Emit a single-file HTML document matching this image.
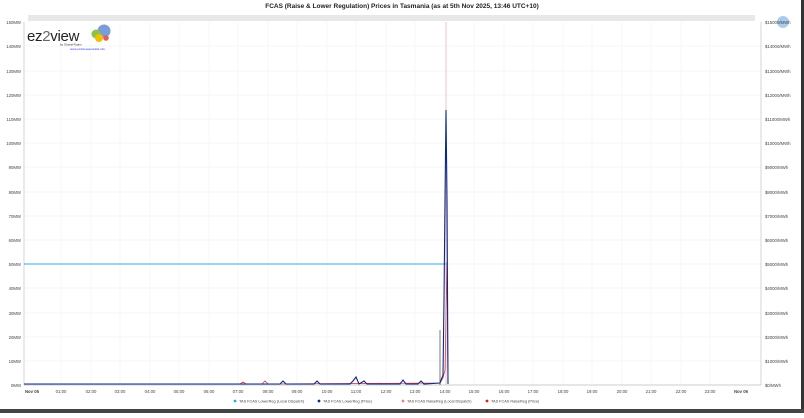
<!DOCTYPE html><html><head><style>body{margin:0;background:#fff;width:804px;height:413px;overflow:hidden;font-family:"Liberation Sans",sans-serif}</style></head><body>
<svg width="804" height="413" xmlns="http://www.w3.org/2000/svg" font-family="Liberation Sans, sans-serif">
<rect x="0" y="0" width="804" height="413" fill="#fff"/>
<rect x="801" y="0" width="3" height="413" fill="#333"/>
<rect x="0" y="409" width="804" height="4" fill="#444"/>
<text x="402" y="8" font-size="6.5" font-weight="bold" text-anchor="middle" fill="#222">FCAS (Raise &amp; Lower Regulation) Prices in Tasmania (as at 5th Nov 2025, 13:46 UTC+10)</text>
<rect x="28" y="15" width="727" height="6" fill="#e8e8e8"/>
<g stroke="#eee" stroke-width="0.6">
<line x1="24" y1="46" x2="761" y2="46"/><line x1="24" y1="71" x2="761" y2="71"/><line x1="24" y1="95" x2="761" y2="95"/><line x1="24" y1="119" x2="761" y2="119"/><line x1="24" y1="143" x2="761" y2="143"/><line x1="24" y1="167" x2="761" y2="167"/><line x1="24" y1="192" x2="761" y2="192"/><line x1="24" y1="216" x2="761" y2="216"/><line x1="24" y1="240" x2="761" y2="240"/><line x1="24" y1="264" x2="761" y2="264"/><line x1="24" y1="288" x2="761" y2="288"/><line x1="24" y1="313" x2="761" y2="313"/><line x1="24" y1="337" x2="761" y2="337"/><line x1="24" y1="361" x2="761" y2="361"/>
</g>
<g stroke="#f2f2f2" stroke-width="0.6">
<line x1="61" y1="22" x2="61" y2="385"/><line x1="91" y1="22" x2="91" y2="385"/><line x1="120" y1="22" x2="120" y2="385"/><line x1="150" y1="22" x2="150" y2="385"/><line x1="179" y1="22" x2="179" y2="385"/><line x1="209" y1="22" x2="209" y2="385"/><line x1="238" y1="22" x2="238" y2="385"/><line x1="268" y1="22" x2="268" y2="385"/><line x1="297" y1="22" x2="297" y2="385"/><line x1="327" y1="22" x2="327" y2="385"/><line x1="356" y1="22" x2="356" y2="385"/><line x1="386" y1="22" x2="386" y2="385"/><line x1="415" y1="22" x2="415" y2="385"/><line x1="474" y1="22" x2="474" y2="385"/><line x1="504" y1="22" x2="504" y2="385"/><line x1="533" y1="22" x2="533" y2="385"/><line x1="563" y1="22" x2="563" y2="385"/><line x1="592" y1="22" x2="592" y2="385"/><line x1="622" y1="22" x2="622" y2="385"/><line x1="651" y1="22" x2="651" y2="385"/><line x1="681" y1="22" x2="681" y2="385"/><line x1="710" y1="22" x2="710" y2="385"/>
</g>
<line x1="24" y1="22" x2="24" y2="385" stroke="#ccc" stroke-width="0.8"/>
<line x1="761" y1="22" x2="761" y2="385" stroke="#ccc" stroke-width="0.8"/>
<line x1="24" y1="385" x2="761" y2="385" stroke="#bbb" stroke-width="0.8"/>
<line x1="446" y1="22" x2="446" y2="385" stroke="#f3b0b0" stroke-width="0.8"/>
<g font-size="4.3" fill="#444" text-anchor="end">
<text x="21" y="24">150MW</text><text x="21" y="48">140MW</text><text x="21" y="73">130MW</text><text x="21" y="97">120MW</text><text x="21" y="121">110MW</text><text x="21" y="145">100MW</text><text x="21" y="169">90MW</text><text x="21" y="194">80MW</text><text x="21" y="218">70MW</text><text x="21" y="242">60MW</text><text x="21" y="266">50MW</text><text x="21" y="290">40MW</text><text x="21" y="315">30MW</text><text x="21" y="339">20MW</text><text x="21" y="363">10MW</text><text x="21" y="387">0MW</text>
</g>
<circle cx="783" cy="22" r="6" fill="#a8cbee"/>
<g font-size="4.3" fill="#444">
<text x="765" y="24">$15000/MWh</text><text x="765" y="48">$14000/MWh</text><text x="765" y="73">$13000/MWh</text><text x="765" y="97">$12000/MWh</text><text x="765" y="121">$11000/MWh</text><text x="765" y="145">$10000/MWh</text><text x="765" y="169">$9000/MWh</text><text x="765" y="194">$8000/MWh</text><text x="765" y="218">$7000/MWh</text><text x="765" y="242">$6000/MWh</text><text x="765" y="266">$5000/MWh</text><text x="765" y="290">$4000/MWh</text><text x="765" y="315">$3000/MWh</text><text x="765" y="339">$2000/MWh</text><text x="765" y="363">$1000/MWh</text><text x="765" y="387">$0/MWh</text>
</g>
<g font-size="4.3" fill="#444" text-anchor="middle">
<text x="32" y="393" font-weight="bold">Nov 05</text><text x="61" y="393">01:00</text><text x="91" y="393">02:00</text><text x="120" y="393">03:00</text><text x="150" y="393">04:00</text><text x="179" y="393">05:00</text><text x="209" y="393">06:00</text><text x="238" y="393">07:00</text><text x="268" y="393">08:00</text><text x="297" y="393">09:00</text><text x="327" y="393">10:00</text><text x="356" y="393">11:00</text><text x="386" y="393">12:00</text><text x="415" y="393">13:00</text><text x="445" y="393">14:00</text><text x="474" y="393">15:00</text><text x="504" y="393">16:00</text><text x="533" y="393">17:00</text><text x="563" y="393">18:00</text><text x="592" y="393">19:00</text><text x="622" y="393">20:00</text><text x="651" y="393">21:00</text><text x="681" y="393">22:00</text><text x="710" y="393">23:00</text><text x="741" y="393" font-weight="bold">Nov 06</text>
</g>
<line x1="24" y1="264" x2="446" y2="264" stroke="#29a8e8" stroke-width="0.9"/>
<polyline fill="none" stroke="#e04040" stroke-width="0.8" points="24,384 240,384 243,382 246,384 262,384 265,381 268,384 440,383 443,378 445,370 447,262 448,384"/>
<polyline fill="none" stroke="#0a2a8a" stroke-width="1.1" points="24,384 280,384 283,381 286,384 314,384 317,381 320,384 350,384 353,381 356,377 359,384 364,381 367,384 400,384 403,380 406,384 418,384 421,381 424,384 440,383 443,375 444,300 445,200 446,110 447,200 448,384"/>
<line x1="440" y1="330" x2="440" y2="385" stroke="#222" stroke-width="0.6"/>
<text x="27" y="41" font-size="15" fill="#222" letter-spacing="-0.3">ez<tspan fill="#666">2</tspan>view</text>
<text x="60" y="45.5" font-size="3" fill="#333">by Global-Roam</text>
<circle cx="104" cy="31" r="6.5" fill="#7a9cd8"/><circle cx="96" cy="34" r="4.5" fill="#8bc34a"/><circle cx="99" cy="38" r="4" fill="#f2c000"/><circle cx="106" cy="38" r="2.8" fill="#e06060"/>
<text x="70" y="50" font-size="3" fill="#33e">www.ez2viewaustralia.info</text>
<g font-size="3.8" fill="#444">
<circle cx="235" cy="401" r="1.4" fill="#29a8e8"/><text x="239" y="402.5">TAS FCAS LowerReg (Local Dispatch)</text>
<circle cx="319" cy="401" r="1.4" fill="#0a2a8a"/><text x="323" y="402.5">TAS FCAS LowerReg (Price)</text>
<circle cx="403" cy="401" r="1.4" fill="#f08080"/><text x="407" y="402.5">TAS FCAS RaiseReg (Local Dispatch)</text>
<circle cx="487" cy="401" r="1.4" fill="#e02020"/><text x="491" y="402.5">TAS FCAS RaiseReg (Price)</text>
</g>
</svg></body></html>
